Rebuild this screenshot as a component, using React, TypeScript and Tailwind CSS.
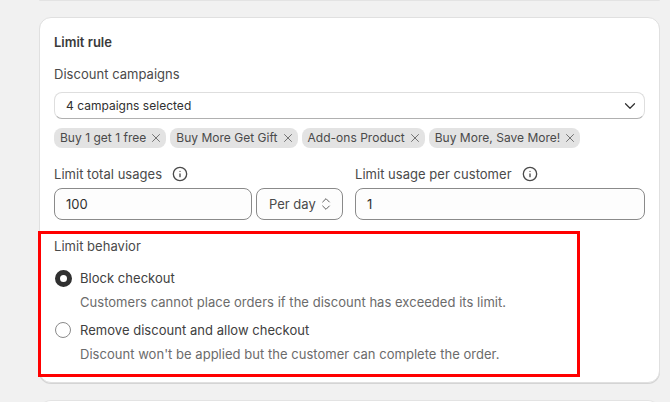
import { ChevronDown, ChevronsUpDown, Info, X } from "lucide-react";

const tags = ["Buy 1 get 1 free", "Buy More Get Gift", "Add-ons Product", "Buy More, Save More!"];

function Tag({ label }: { label: string }) {
  return (
    <span className="flex h-5 items-center gap-[3px] whitespace-nowrap rounded-lg bg-[#e3e3e3] pl-1.5 pr-[3px] text-xs leading-5 tracking-[0.02px] text-[#4a4a4a]">
      {label}
      <X size={14} strokeWidth={1.6} className="text-[#6b6b6b]" />
    </span>
  );
}

function Label({ text, info }: { text: string; info?: boolean }) {
  return (
    <div className="flex h-5 items-center gap-[10px] text-[13px] tracking-[0.03px] text-[#4a4a4a]">
      <span className="translate-y-px">{text}</span>
      {info && <Info size={16} strokeWidth={2} className="text-[#4a4a4a]" />}
    </div>
  );
}

export default function App() {
  return (
    <div className="relative h-[402px] w-[670px] overflow-hidden bg-[#f1f1f1] font-['Inter',sans-serif]">
      <div className="ml-[39px] mr-[10px] h-px rounded-b-xl bg-[#e3e3e3]" />

      <div className="relative ml-[39px] mr-[10px] mt-4 h-[366px] rounded-xl border border-[#e0e0e0] bg-white pl-[14px] pr-[14px] pt-[15px] shadow-[0_1px_0_#d4d4d4]">
        <h2 className="h-[18px] text-[13px] leading-[18px] font-semibold text-[#3a3a3a]">Limit rule</h2>

        <div className="mt-[13px]">
          <Label text="Discount campaigns" />
        </div>
        <div className="mt-2 flex h-[27px] items-center justify-between rounded-lg border border-[#dedede] border-b-[#b0b0b0] pl-[11px] pr-[5px] text-xs tracking-[0.02px] text-[#303030]">
          4 campaigns selected
          <ChevronDown size={18} strokeWidth={1.6} className="text-[#303030]" />
        </div>

        <div className="mt-[9px] flex gap-1">
          {tags.map((t) => (
            <Tag key={t} label={t} />
          ))}
        </div>

        <div className="mt-4 flex gap-3">
          <div>
            <Label text="Limit total usages" info />
            <div className="mt-1 flex gap-1">
              <div className="flex h-8 w-[198px] items-center rounded-lg border border-[#8a8a8a] bg-[#fdfdfd] px-[11px] text-[13px] text-[#303030]">
                <span className="translate-y-px">100</span>
              </div>
              <div className="flex h-8 w-[87px] items-center justify-between rounded-lg border border-[#8a8a8a] bg-[#fdfdfd] pl-3 pr-2 text-[13px] text-[#4a4a4a]">
                <span className="translate-y-px">Per day</span>
                <ChevronsUpDown size={16} strokeWidth={1.5} className="text-[#5f5f5f]" />
              </div>
            </div>
          </div>
          <div className="flex-1">
            <Label text="Limit usage per customer" info />
            <div className="mt-1 flex h-8 items-center rounded-lg border border-[#8a8a8a] bg-[#fdfdfd] px-[11px] text-[13px] text-[#303030]">
              <span className="translate-y-px">1</span>
            </div>
          </div>
        </div>

        <div className="mt-4">
          <Label text="Limit behavior" />
        </div>

        <div className="mt-[12px] flex h-5 items-center gap-[9px] text-[13px] tracking-[0.03px] text-[#404040]">
          <span className="ml-px -mr-px size-[17px] rounded-full border-[5px] border-[#303030] bg-white" />
          <span className="translate-y-px">Block checkout</span>
        </div>
        <p className="mt-1 h-5 pl-[26px] text-[13px] leading-5 tracking-[0.03px] text-[#6b6b6b]">
          Customers cannot place orders if the discount has exceeded its limit.
        </p>
        <div className="mt-2 flex h-5 items-center gap-[9px] text-[13px] tracking-[0.03px] text-[#404040]">
          <span className="ml-px size-4 rounded-full border border-[#8a8a8a] bg-white" />
          <span className="translate-y-px">Remove discount and allow checkout</span>
        </div>
        <p className="mt-1 h-5 pl-[26px] text-[13px] leading-5 tracking-[0.03px] text-[#6b6b6b]">
          Discount won't be applied but the customer can complete the order.
        </p>

        {/* annotation box drawn over the screenshot */}
        <div className="absolute top-[213px] -left-[2px] h-[146px] w-[542px] border-[3px] border-[#ff0000]" />
      </div>

      <div className="ml-[39px] mr-[10px] mt-[17px] h-4 rounded-t-xl border-t border-[#e3e3e3] bg-white" />
    </div>
  );
}
